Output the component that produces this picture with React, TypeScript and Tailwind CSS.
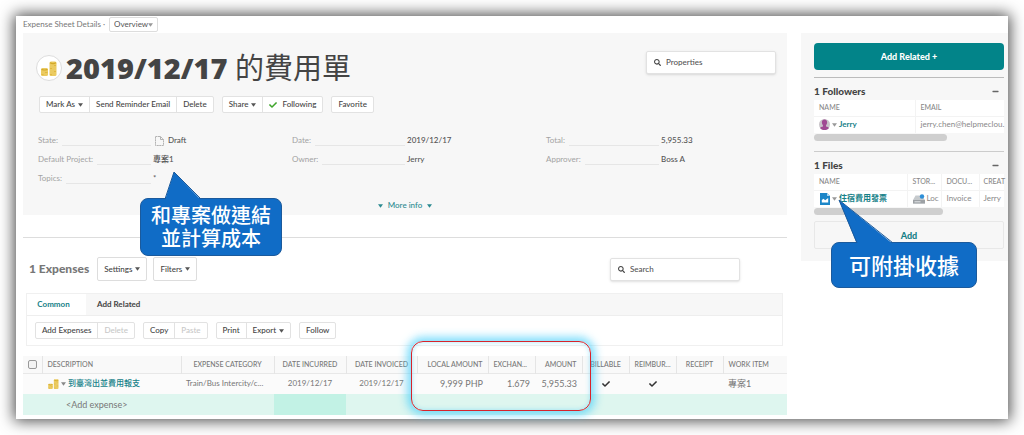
import React from 'react';
import { FaCheck, FaMinus, FaSearch } from 'react-icons/fa';
import clsx from 'clsx';

const Caret = ({ className = 'text-[#555]' }: { className?: string }) => (
  <svg viewBox="0 0 6 4" className={clsx('w-[5px] h-1 shrink-0', className)} fill="currentColor">
    <path d="M0 0h6L3 4z" />
  </svg>
);

const Coins = ({ className }: { className?: string }) => (
  <svg viewBox="0 0 16 15" className={className}>
    <rect x="0" y="7" width="7" height="8" rx="1.5" fill="#ebcb62" />
    <rect x="8.5" y="0.5" width="7" height="14.5" rx="1.5" fill="#ebcb62" />
    <path d="M0.5 8.2q3 1.6 6 0M9 1.8q3 1.6 6 0" stroke="#d3a928" strokeWidth="1.2" fill="none" />
    <path d="M0.5 13.6h2M4 11.5h2.5M9 13.6h2M13 10.5h2M9 7.5h2M13 4.5h2" stroke="#dfb63c" strokeWidth="0.9" />
  </svg>
);

const Person = () => (
  <svg viewBox="0 0 11 11" className="size-[11px] shrink-0">
    <circle cx="5.5" cy="5.5" r="5.5" fill="#c9c4c9" />
    <path
      d="M5.5 0.6c2 0 2.8 1.4 2.6 3.2-.1 1.2-.6 2-1.1 2.6v1c1.4.4 2.5.7 2.9 1.5C8.9 10.2 7.3 11 5.5 11s-3.4-.8-4.4-2.1C1.5 8.1 2.6 7.8 4 7.4v-1C3.5 5.8 3 5 2.9 3.8 2.7 2 3.5.6 5.5.6z"
      fill="#a04a93"
    />
  </svg>
);

const FileIcon = () => (
  <svg viewBox="0 0 10 12" className="w-[10px] h-3 shrink-0">
    <path d="M0 0h7l3 3v9H0z" fill="#1c86c8" />
    <path d="M7 0v3h3z" fill="#a9d4ee" />
    <path d="M1.8 9.5V7l1.7-1.3L5.2 7.2 8.2 5v4.5z" fill="#fff" />
  </svg>
);

const Drive = () => (
  <svg viewBox="0 0 12 10" className="w-3 h-[10px] shrink-0">
    <path d="M2.5 1.5h6L12 6v3.5H0V6z" fill="#c6cacd" />
    <path d="M0 6h12v3.5H0z" fill="#9da1a5" />
    <path d="M1.5 7.8h6" stroke="#e3e6e8" strokeWidth="1" />
    <circle cx="9" cy="2.5" r="2.2" fill="#2e8fd8" />
  </svg>
);

const DraftIcon = () => (
  <svg viewBox="0 0 9 10" className="w-[9px] h-[10px] shrink-0" fill="none" stroke="#aaa" strokeWidth="0.9">
    <path d="M0.5 0.5h5l3 3v6h-8z" strokeDasharray="2 0.5" />
    <path d="M5.5 0.5v3h3" />
  </svg>
);

type Item = { label: string; caret?: boolean; disabled?: boolean; check?: boolean };

const ButtonGroup = ({ items }: { items: Item[] }) => (
  <div className="flex h-[17px] bg-white border border-[#e2e2e2] rounded-xs divide-x divide-[#e2e2e2]">
    {items.map((item) => (
      <button
        key={item.label}
        disabled={item.disabled}
        className={clsx(
          'flex items-center gap-[3px] px-[6px] whitespace-nowrap font-medium',
          item.disabled ? 'text-[#c8c8c8]' : 'text-[#444]',
        )}
      >
        {item.check && <FaCheck className="size-2 text-[#3fa52c] mr-[2px]" />}
        {item.label}
        {item.caret && <Caret />}
      </button>
    ))}
  </div>
);

const SearchBox = ({ label }: { label: string }) => (
  <label className="flex items-center gap-[5px] w-[130px] h-[23px] px-[7px] bg-white border border-[#e2e2e2] rounded-xs shadow-sm">
    <FaSearch className="size-[7px] text-[#444] shrink-0" />
    <input
      type="search"
      aria-label={label}
      placeholder={label}
      className="w-full outline-none font-medium placeholder:text-[#555]"
    />
  </label>
);

const Field = ({ label, children }: { label: string; children: React.ReactNode }) => (
  <div className="flex items-center h-[19px]">
    <dt className="flex w-[113px] mr-[2px] text-[#a3a3a3]">
      {label}:<span className="grow ml-1 mb-px border-b border-[#e6e6e6]" />
    </dt>
    <dd className="flex items-center gap-1 font-medium text-[#555]">{children}</dd>
  </div>
);

const PanelTitle = ({ title }: { title: string }) => (
  <div className="flex items-center justify-between h-[22px] pt-1">
    <h3 className="text-[10px] font-black text-[#444]">{title}</h3>
    <button aria-label={`Collapse ${title}`} className="flex items-center justify-center size-[13px] mr-[2px]">
      <FaMinus className="size-[7px] text-[#666]" />
    </button>
  </div>
);

const Callout = ({
  className,
  tail,
  children,
}: {
  className: string;
  tail: React.ReactNode;
  children: React.ReactNode;
}) => (
  <div
    className={clsx(
      'absolute z-10 flex items-center justify-center text-center text-white bg-[#106cc6] border border-[#1b5a9c] rounded-lg',
      className,
    )}
  >
    {tail}
    {children}
  </div>
);

const columns = [
  { name: 'DESCRIPTION', width: 'w-[139px]', align: 'text-left' },
  { name: 'EXPENSE CATEGORY', width: 'w-[93px]', align: 'text-center' },
  { name: 'DATE INCURRED', width: 'w-[72px]', align: 'text-center' },
  { name: 'DATE INVOICED', width: 'w-[71px]', align: 'text-center' },
  { name: 'LOCAL AMOUNT', width: 'w-[71px]', align: 'text-right' },
  { name: 'EXCHAN...', width: 'w-[47px]', align: 'text-left' },
  { name: 'AMOUNT', width: 'w-[47px]', align: 'text-right' },
  { name: 'BILLABLE', width: 'w-[47px]', align: 'text-center' },
  { name: 'REIMBUR...', width: 'w-[47px]', align: 'text-center' },
  { name: 'RECEIPT', width: 'w-[47px]', align: 'text-center' },
  { name: 'WORK ITEM', width: '', align: 'text-left' },
];

export default function App() {
  return (
    <div className="p-4 bg-white font-[Lato,'Noto_Sans_CJK_TC',sans-serif] text-[8px] leading-[13px]">
      <div className="grid grid-cols-[minmax(0,1fr)_207px] gap-[14px] pl-[7px] pb-1 bg-white shadow-[0_0_14px_2px_rgba(0,0,0,0.7)]">
        <main className="min-w-0">
          <div className="flex items-center gap-1 h-[17px] text-[#777]">
            <label htmlFor="view">Expense Sheet Details ·</label>
            <div className="flex items-center h-[15px] pr-1 border border-[#ddd] rounded-xs">
              <select id="view" className="appearance-none w-[38px] pl-1 text-[#555] outline-none">
                <option>Overview</option>
              </select>
              <Caret className="text-[#999]" />
            </div>
          </div>

          <section className="relative bg-[#f7f7f7] h-[182px] pt-[18px]">
            <div className="flex items-start justify-between pl-[13px] pr-[11px]">
              <div className="flex items-center gap-1">
                <span className="flex items-center justify-center size-[26px] bg-white border border-[#ddd] rounded-full">
                  <Coins className="w-4 h-[15px]" />
                </span>
                <h1 className="font-['Open_Sans','Noto_Sans_CJK_TC',sans-serif] text-[29px] leading-[34px] font-extrabold text-[#444]">
                  2019/12/17 <span className="font-normal">的費用單</span>
                </h1>
              </div>
              <SearchBox label="Properties" />
            </div>

            <div className="flex gap-2 mt-[11px] pl-4">
              <ButtonGroup
                items={[{ label: 'Mark As', caret: true }, { label: 'Send Reminder Email' }, { label: 'Delete' }]}
              />
              <ButtonGroup items={[{ label: 'Share', caret: true }, { label: 'Following', check: true }]} />
              <ButtonGroup items={[{ label: 'Favorite' }]} />
            </div>

            <dl className="grid grid-cols-3 gap-x-[19px] mt-[18px] pl-[15px] pr-[6px]">
              <Field label="State">
                <span className="flex items-center gap-1 pl-[2px]">
                  <DraftIcon />
                  Draft
                </span>
              </Field>
              <Field label="Date">2019/12/17</Field>
              <Field label="Total">5,955.33</Field>
              <Field label="Default Project">專案1</Field>
              <Field label="Owner">Jerry</Field>
              <Field label="Approver">Boss A</Field>
              <Field label="Topics">*</Field>
            </dl>

            <button className="flex items-center gap-[5px] mx-auto mt-[11px] text-[#2b8a90] font-medium">
              <Caret className="w-[3px]" />
              More info
              <Caret className="w-[3px]" />
            </button>

            <Callout
              className="left-[117px] top-[165px] w-[142px] h-[58px] text-[20px] leading-[23px] font-medium"
              tail={
                <svg viewBox="0 0 38 29" className="absolute left-[23px] -top-[28px] w-[38px] h-[29px]">
                  <path d="M1 29L10 1l27 28z" fill="#106cc6" />
                  <path d="M1 28L10 1l27 27" fill="none" stroke="#1b5a9c" />
                </svg>
              }
            >
              <p>
                和專案做連結
                <br />
                並計算成本
              </p>
            </Callout>
          </section>

          <section className="mt-[22px] border-t border-[#ddd] pt-[19px]">
            <div className="flex items-center pl-[6px] pr-[47px]">
              <h2 className="mr-2 text-[12px] leading-6 font-black text-[#777]">1 Expenses</h2>
              <div className="flex gap-[6px]">
                {['Settings', 'Filters'].map((name) => (
                  <button
                    key={name}
                    className="flex items-center gap-[3px] h-6 px-[6px] bg-white border border-[#ddd] rounded-xs text-[#444] font-medium"
                  >
                    {name}
                    <Caret />
                  </button>
                ))}
              </div>
              <div className="ml-auto">
                <SearchBox label="Search" />
              </div>
            </div>

            <div className="mt-3 ml-[3px] mr-1 border border-[#f0f0f0]">
              <div className="flex h-[22px] bg-[#f7f7f7] border-b border-[#eee] font-bold">
                <button className="w-[59px] pr-[6px] bg-white text-[#168188]">Common</button>
                <button className="px-[11px] text-[#444]">Add Related</button>
              </div>
              <div className="flex gap-2 py-[6px] pl-2">
                <ButtonGroup items={[{ label: 'Add Expenses' }, { label: 'Delete', disabled: true }]} />
                <ButtonGroup items={[{ label: 'Copy' }, { label: 'Paste', disabled: true }]} />
                <ButtonGroup items={[{ label: 'Print' }, { label: 'Export', caret: true }]} />
                <ButtonGroup items={[{ label: 'Follow' }]} />
              </div>
            </div>

            <div className="relative mt-[10px]">
              <table className="w-full table-fixed text-[#777] whitespace-nowrap">
                <thead>
                  <tr className="h-[17px] bg-[#f9f9f9] border-b border-[#e8e8e8] text-[7px]">
                    <th className="w-[19px] pl-[5px]">
                      <input
                        type="checkbox"
                        aria-label="Select all expenses"
                        className="block appearance-none size-[9px] bg-[#f3f3f3] border border-[#999] rounded-xs"
                      />
                    </th>
                    {columns.map((col) => (
                      <th
                        key={col.name}
                        className={clsx('px-[5px] font-medium border-l border-[#e5e5e5]', col.width, col.align)}
                      >
                        {col.name}
                      </th>
                    ))}
                  </tr>
                </thead>
                <tbody>
                  <tr className="h-[21px] bg-[#fbfbfb]">
                    <td />
                    <td className="px-[6px]">
                      <span className="flex items-center gap-[2px]">
                        <Coins className="w-[11px] h-[10px]" />
                        <Caret className="w-1 text-[#888]" />
                        <a href="#expense" className="text-[#168188] font-medium">
                          到臺灣出並費用報支
                        </a>
                      </span>
                    </td>
                    <td className="px-[5px]">Train/Bus Intercity/c...</td>
                    <td className="text-center">2019/12/17</td>
                    <td className="text-center">2019/12/17</td>
                    <td className="px-[5px] text-right text-[9px]">9,999 PHP</td>
                    <td className="px-[5px] text-right text-[9px]">1.679</td>
                    <td className="px-[5px] text-right text-[9px]">5,955.33</td>
                    <td>
                      <FaCheck className="size-2 mx-auto text-[#333]" />
                    </td>
                    <td>
                      <FaCheck className="size-2 mx-auto text-[#333]" />
                    </td>
                    <td />
                    <td className="px-[5px] text-[9px]">專案1</td>
                  </tr>
                  <tr className="h-[21px] bg-[#def6ef] text-[9px]">
                    <td />
                    <td className="pl-6" colSpan={2}>
                      &lt;Add expense&gt;
                    </td>
                    <td className="bg-[#c2f2e5]" />
                    <td colSpan={8} />
                  </tr>
                </tbody>
              </table>
              <div className="absolute left-[388px] -top-[15px] w-[180px] h-[70px] border border-[#d8232a] rounded-xl shadow-[0_0_8px_4px_rgba(60,205,250,0.65),inset_0_0_5px_rgba(60,205,250,0.45)] pointer-events-none" />
            </div>
          </section>
        </main>

        <aside className="relative self-start mt-[17px] pl-[13px] pr-1 pt-[10px] pb-3 bg-[#f7f7f7]">
          <button className="w-full h-[27px] bg-[#028489] text-[9px] text-white font-black rounded-sm">
            Add Related +
          </button>

          <section className="mt-[7px] border-t border-[#bbb]">
            <PanelTitle title="1 Followers" />
            <table className="w-full table-fixed bg-white text-[#888] whitespace-nowrap">
              <thead>
                <tr className="h-4 text-[7px] text-left border-b border-[#f3f3f3]">
                  <th className="w-[101px] pl-[5px] font-medium">NAME</th>
                  <th className="pl-[5px] font-medium border-l border-[#f3f3f3]">EMAIL</th>
                </tr>
              </thead>
              <tbody>
                <tr className="h-[17px]">
                  <td className="pl-[5px]">
                    <span className="flex items-center gap-[2px]">
                      <Person />
                      <Caret className="w-1 text-[#999]" />
                      <a href="#jerry" className="text-[#168188] font-bold">
                        Jerry
                      </a>
                    </span>
                  </td>
                  <td className="pl-[5px] border-l border-[#f3f3f3]">jerry.chen@helpmeclou.</td>
                </tr>
              </tbody>
            </table>
            <div className="w-[70%] h-[7px] mt-px bg-[#cfcfcf] rounded-full" />
          </section>

          <section className="mt-[10px] border-t border-[#ccc]">
            <PanelTitle title="1 Files" />
            <table className="w-full table-fixed bg-white text-[#888] whitespace-nowrap">
              <thead>
                <tr className="h-4 text-[7px] text-left border-b border-[#f3f3f3]">
                  <th className="w-[93px] pl-[5px] font-medium">NAME</th>
                  <th className="w-[34px] pl-[5px] font-medium border-l border-[#f3f3f3]">STOR...</th>
                  <th className="w-[38px] pl-[5px] font-medium border-l border-[#f3f3f3]">DOCU...</th>
                  <th className="pl-[4px] font-medium border-l border-[#f3f3f3]">CREAT</th>
                </tr>
              </thead>
              <tbody>
                <tr className="h-[17px]">
                  <td className="pl-[6px]">
                    <span className="flex items-center gap-[2px]">
                      <FileIcon />
                      <Caret className="w-1 text-[#999]" />
                      <a href="#file" className="text-[#168188] font-bold">
                        住宿費用發票
                      </a>
                    </span>
                  </td>
                  <td className="pl-[5px] border-l border-[#f3f3f3]">
                    <span className="flex items-center gap-[2px]">
                      <Drive />
                      Loc
                    </span>
                  </td>
                  <td className="pl-[5px] border-l border-[#f3f3f3]">Invoice</td>
                  <td className="pl-[4px] border-l border-[#f3f3f3]">Jerry</td>
                </tr>
              </tbody>
            </table>
            <div className="w-[68%] h-[7px] mt-px bg-[#cfcfcf] rounded-full" />
            <button className="w-full h-[28px] mt-[6px] border border-[#e8e8e8] rounded-xs text-[9px] text-[#168188] font-black">
              Add
            </button>
          </section>

          <Callout
            className="left-[30px] top-[209px] w-[146px] h-[46px] text-[22px] font-medium"
            tail={
              <svg viewBox="0 0 56 45" className="absolute left-[6px] -top-[44px] w-[56px] h-[45px]">
                <path d="M19 45L1 1l54 44z" fill="#106cc6" />
                <path d="M19 44L1 1l54 43" fill="none" stroke="#1b5a9c" />
              </svg>
            }
          >
            可附掛收據
          </Callout>
        </aside>
      </div>
    </div>
  );
}
